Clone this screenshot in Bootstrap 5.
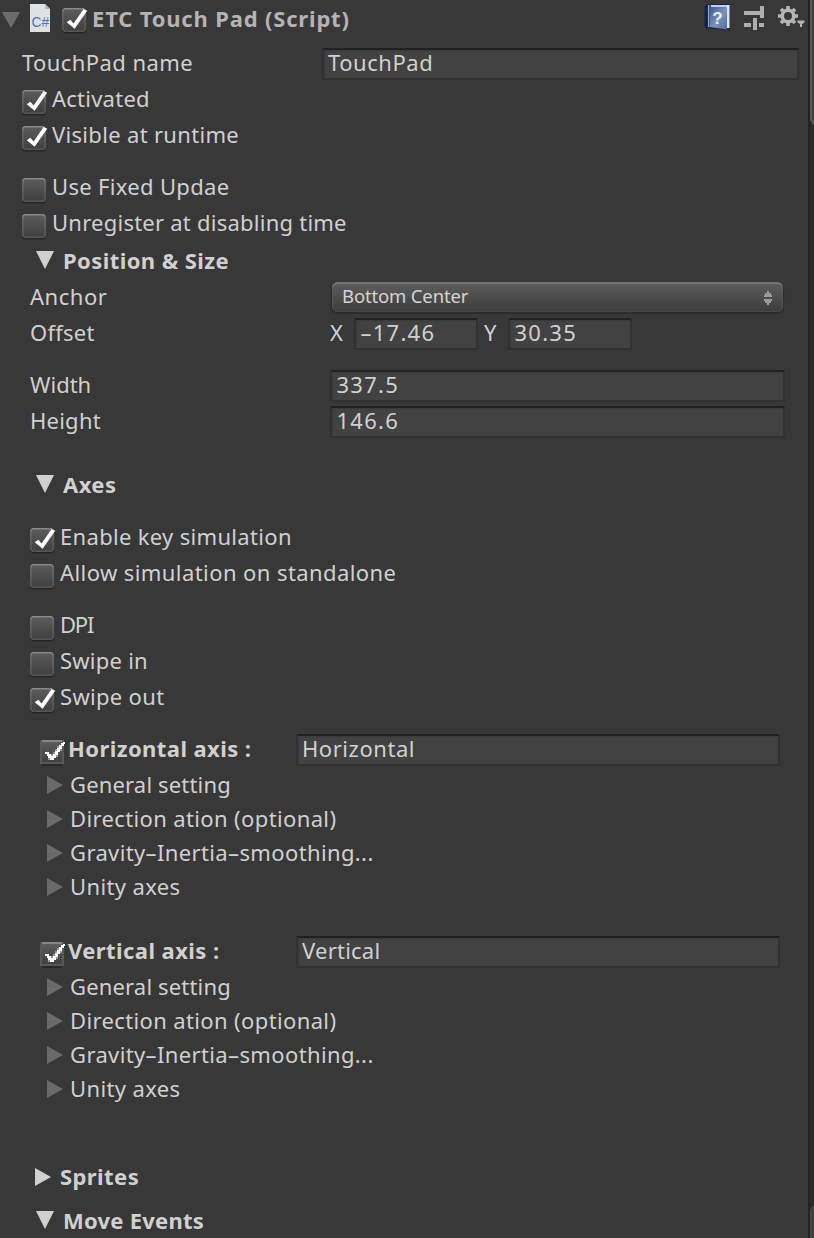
<!DOCTYPE html>
<html lang="en" data-bs-theme="dark">
<head>
<meta charset="utf-8">
<meta name="viewport" content="width=device-width, initial-scale=1">
<title>Inspector</title>
<link href="https://cdn.jsdelivr.net/npm/bootstrap@5.3.0/dist/css/bootstrap.min.css" rel="stylesheet">
<style>
  html, body { height: 1238px; overflow: hidden; }
  body { background: #383838; color: #d0d0d0; font: 22px/36px "Noto Sans", "Open Sans", sans-serif; letter-spacing: .42px; }
  .inspector { width: 808px; height: 1238px; }
  .line { height: 36px; display: flex; white-space: nowrap; }
  .line > svg { flex: none; }
  .fold { height: 34px; line-height: 34px; display: flex; white-space: nowrap; padding-left: 47px; letter-spacing: .37px; }
  .fold svg { flex: none; margin: 9px 7px 0 0; }
  .sp0 { letter-spacing: 0; }
  .sp2 { letter-spacing: .24px; }
  .sp3 { letter-spacing: .32px; }
  .sp6 { letter-spacing: .54px; }
  .sp8 { letter-spacing: .82px; }
  .fold.sp1 { letter-spacing: .16px; }
  .gap-row { height: 16px; }
  .in22 { padding-left: 22px; }
  .in30 { padding-left: 30px; }
  .in40 { padding-left: 40px; }
  .tick { width: 30px; height: 28px; margin-top: 10px; }
  .lab { width: 300px; flex: none; }
  .field.form-control {
    height: 32px; margin-top: 4px; padding: 0 4px 5px; flex: none;
    font: inherit; line-height: 23px; color: #d0d0d0; background: #424242;
    border: 2px solid #323232; border-top-color: #212121; border-radius: 0;
    box-shadow: inset 1px 1px 1px #3b3b3b;
  }
  .num.form-control { letter-spacing: 1.25px; padding-left: 4.5px; }
  .w124.form-control { width: 124px; }
  .w455.form-control { width: 455px; }
  .w477.form-control { width: 477px; }
  .w484.form-control { width: 484px; }
  .popup.btn {
    width: 451px; height: 30px; margin: 4px 0 0 2px; padding: 0 9px 2px 10px;
    font-size: 18.5px; line-height: 26px; letter-spacing: -.15px; color: #d4d4d4; border: 0; border-radius: 6px;
    background: linear-gradient(#5e5e5e, #3c3c3c);
    box-shadow: inset 0 2px 0 #747474, inset 0 -1px 0 #484848, inset 1px 0 0 #565656, inset -1px 0 0 #565656, 0 1px 1px 1px #2c2c2c;
  }
  .popup svg { margin-top: 3px; }
  .sect { font-weight: 700; }
  .hd { height: 44px; color: #b4b4b4; font-weight: 700; }
  .hd-arrow { width: 22px; height: 22px; margin-top: 8px; flex: none; }
  .cs { margin: 4px 0 0 8px; flex: none; }
  .hd-tick { margin: 8px 0 0 12px; flex: none; }
  .hd-title { width: 610px; flex: none; }
  .hd-tools { flex: none; }
  .dn { margin: 11px 9px 0 6px; }
  .rt { margin: 10px 9px 0 5px; }
  .big { height: 38px; padding-top: 2px; }
  .big .dn { margin-top: 9px; }
  .axes { margin-top: 28px; }
  .axes .dn { margin-top: 9px; }
  .events { margin-top: 8px; }
  .events .dn { margin-top: 9px; }
  .axis { width: 24px; flex: none; }
  .second { margin-left: 6px; }
  .dpi { letter-spacing: -1.2px; }
  .tick.pix { margin-right: -2px; }
  .axis-name { width: 228px; flex: none; font-weight: 700; }
  .folds { padding-top: 1px; }
  .folds svg { color: #6a6a6a; }
  .later { margin-top: 29px; }
  .tail { margin-top: 53px; }
  .track { width: 6px; height: 1238px; background: #2b2b2b; border-left: 2px solid #242424; overflow: hidden; }
  .thumb { width: 14px; border: 2px solid #585858; background: #414141; }
  .thumb.upper { height: 129px; margin-top: -2px; border-radius: 0 0 0 9px; }
  .thumb.lower { height: 60px; margin-top: 1079px; border-radius: 5px 0 0 0; border-color: #474747; background: #3c3c3c; }
</style>
</head>
<body>
<svg width="0" height="0" class="position-absolute" aria-hidden="true">
  <defs>
    <linearGradient id="face" x1="0" y1="0" x2="0" y2="1"><stop offset="0" stop-color="#5c5c5c"/><stop offset="1" stop-color="#404040"/></linearGradient>
    <linearGradient id="rim" x1="0" y1="0" x2="0" y2="1"><stop offset="0" stop-color="#8a8a8a"/><stop offset=".15" stop-color="#6a6a6a"/><stop offset="1" stop-color="#555"/></linearGradient>
    <linearGradient id="cover" x1="0" y1="0" x2="1" y2="1"><stop offset="0" stop-color="#34558c"/><stop offset=".55" stop-color="#7b95bb"/><stop offset="1" stop-color="#4d6c9c"/></linearGradient>
    <symbol id="off" viewBox="0 0 30 28">
      <rect x="0" y="1.400" width="24" height="24" rx="4" fill="#262626"/>
      <rect x=".8" y=".8" width="22.400" height="22.400" rx="3" fill="url(#face)" stroke="url(#rim)" stroke-width="1.600"/>
    </symbol>
    <symbol id="on" viewBox="0 0 30 28">
      <use href="#off" width="30" height="28"/>
      <path d="M4.800 14.200 8.300 11.800 11.600 15.500 21.600 1 25.200 2.800 12.600 20.800Z" fill="#fff"/>
    </symbol>
    <symbol id="onpix" viewBox="0 0 30 28">
      <path d="M2 24H22V26H2Z" fill="#282828"/>
      <path d="M0 0H24V24H0Z" fill="#585858"/>
      <path d="M2 0H22V2H2Z" fill="#858585"/>
      <path d="M2 2H22V22H2Z" fill="url(#face)"/>
      <path d="M5 12H9V14H11V16H13V14H15V11H17V8H19V5H21V3H23V2H25V4H24V6H22V9H20V12H18V15H16V18H14V20H10V18H8V16H7V14H5Z" fill="#fff"/>
      <path d="M11 14H13V16H11ZM13 12H15V14H13ZM15 9H17V11H15ZM17 6H19V8H17ZM8 18H10V20H8ZM16 15H18V17H16ZM20 9H22V11H20Z" fill="#999"/>
    </symbol>
    <symbol id="down" viewBox="0 0 18 18"><path d="M0 0H18L9 18Z" fill="currentColor"/></symbol>
    <symbol id="right" viewBox="0 0 16 18"><path d="M0 0L16 9 0 18Z" fill="currentColor"/></symbol>
  </defs>
</svg>

<div class="d-flex">
  <main class="inspector">
    <header class="hd d-flex text-nowrap">
      <svg class="hd-arrow" viewBox="0 0 22 22"><path d="M2 4H20L11 20Z" fill="#6c6c6c"/></svg>
      <svg class="cs" width="20" height="28" viewBox="0 0 20 28"><path d="M0 0H15L20 5V28H0Z" fill="#dfe2e4"/><path d="M15 0V5H20Z" fill="#b5b8bb"/><text x="1.500" y="23" font-family="Liberation Sans" font-size="14" font-weight="400" fill="#4a74c0" textLength="17.500" lengthAdjust="spacingAndGlyphs" letter-spacing="0">C#</text></svg>
      <svg class="tick hd-tick"><use href="#on"/></svg>
      <span class="hd-title sp8">ETC Touch Pad (Script)</span>
      <svg class="hd-tools" width="104" height="34" viewBox="702 0 104 34">
        <path d="M704.500 6 708 4V30L704.500 27Z" fill="#142440"/>
        <path d="M707 4H730V31L707 28Z" fill="#1b2c4b"/>
        <path d="M710 5H727V29.500L710 27Z" fill="url(#cover)"/>
        <path d="M708 5H709.400V27H708Z" fill="#8ba6cf"/>
        <path d="M727 5H729.500V28H727Z" fill="#dce4ee"/>
        <path d="M711 5H727V7H711Z" fill="#c3d0e2"/>
        <text x="712.200" y="23.500" font-family="Liberation Sans" font-weight="700" font-size="17" letter-spacing="0" fill="#e6edf7">?</text>
        <path d="M744 11H758V15H744ZM760 6H764V18H760ZM756 11H760V15H756ZM744 23H751V27H744ZM753 18H757V30H753ZM759 23H764V27H759Z" fill="#aeaeae"/>
        <circle cx="788" cy="16" r="5.800" fill="none" stroke="#b4b4b4" stroke-width="3.600"/>
        <path d="M788 6V9.500M788 22.500V26M778 16H781.500M794.500 16H798M781 9 783.500 11.500M795 9 792.500 11.500M781 23 783.500 20.500M795 23 792.500 20.500" stroke="#b4b4b4" stroke-width="3.600"/>
        <path d="M797.500 20.500H804.500V22.500L802 24V27H800V24L797.500 22.500Z" fill="#b4b4b4"/>
      </svg>
    </header>

    <section class="in22">
      <div class="line"><label class="lab">TouchPad name</label><input class="form-control field w477 sp6" type="text" value="TouchPad"></div>
      <div class="line"><svg class="tick"><use href="#on"/></svg><span class="sp2">Activated</span></div>
      <div class="line"><svg class="tick"><use href="#on"/></svg><span class="sp3">Visible at runtime</span></div>
      <div class="gap-row"></div>
      <div class="line"><svg class="tick"><use href="#off"/></svg><span class="sp3">Use Fixed Updae</span></div>
      <div class="line"><svg class="tick"><use href="#off"/></svg><span class="sp2">Unregister at disabling time</span></div>
    </section>

    <section class="in30">
      <div class="line sect big"><svg class="dn" width="18" height="18"><use href="#down"/></svg><span>Position &amp; Size</span></div>
      <div class="line"><label class="lab sp6">Anchor</label>
        <button type="button" class="btn popup d-flex justify-content-between align-items-center"><span>Bottom Center</span>
          <svg width="12" height="18" viewBox="0 0 12 18"><path d="M5 2H7V4H9V6H10V8H2V6H3V4H5ZM2 10H10V12H9V14H7V16H5V14H3V12H2Z" fill="#999"/></svg>
        </button></div>
      <div class="line"><span class="lab sp2">Offset</span><label class="axis">X</label><input class="form-control field num w124" type="text" value="–17.46"><label class="axis second">Y</label><input class="form-control field num w124" type="text" value="30.35"></div>
      <div class="gap-row"></div>
      <div class="line"><label class="lab sp0">Width</label><input class="form-control field num w455" type="text" value="337.5"></div>
      <div class="line"><label class="lab sp2">Height</label><input class="form-control field num w455" type="text" value="146.6"></div>
      <div class="line sect axes"><svg class="dn" width="18" height="18"><use href="#down"/></svg><span>Axes</span></div>
      <div class="gap-row"></div>
      <div class="line"><svg class="tick"><use href="#on"/></svg><span class="sp3">Enable key simulation</span></div>
      <div class="line"><svg class="tick"><use href="#off"/></svg><span>Allow simulation on standalone</span></div>
      <div class="gap-row"></div>
      <div class="line"><svg class="tick"><use href="#off"/></svg><span class="dpi">DPI</span></div>
      <div class="line"><svg class="tick"><use href="#off"/></svg><span class="sp2">Swipe in</span></div>
      <div class="line"><svg class="tick"><use href="#on"/></svg><span class="sp3">Swipe out</span></div>
      <div class="gap-row"></div>
    </section>

    <section class="axis-group">
      <div class="line in40"><svg class="tick pix"><use href="#onpix"/></svg><label class="axis-name">Horizontal axis :</label><input class="form-control field w484 sp6" type="text" value="Horizontal"></div>
      <div class="folds">
        <div class="fold sp1"><svg width="16" height="18"><use href="#right"/></svg><span>General setting</span></div>
        <div class="fold"><svg width="16" height="18"><use href="#right"/></svg><span>Direction ation (optional)</span></div>
        <div class="fold"><svg width="16" height="18"><use href="#right"/></svg><span>Gravity–Inertia–smoothing...</span></div>
        <div class="fold"><svg width="16" height="18"><use href="#right"/></svg><span>Unity axes</span></div>
      </div>
    </section>

    <section class="axis-group later">
      <div class="line in40"><svg class="tick pix"><use href="#onpix"/></svg><label class="axis-name">Vertical axis :</label><input class="form-control field w484 sp2" type="text" value="Vertical"></div>
      <div class="folds">
        <div class="fold sp1"><svg width="16" height="18"><use href="#right"/></svg><span>General setting</span></div>
        <div class="fold"><svg width="16" height="18"><use href="#right"/></svg><span>Direction ation (optional)</span></div>
        <div class="fold"><svg width="16" height="18"><use href="#right"/></svg><span>Gravity–Inertia–smoothing...</span></div>
        <div class="fold"><svg width="16" height="18"><use href="#right"/></svg><span>Unity axes</span></div>
      </div>
    </section>

    <section class="in30 tail">
      <div class="line sect"><svg class="rt" width="16" height="18"><use href="#right"/></svg><span>Sprites</span></div>
      <div class="line sect events sp2"><svg class="dn" width="18" height="18"><use href="#down"/></svg><span>Move Events</span></div>
    </section>
  </main>
  <aside class="track"><div class="thumb upper"></div><div class="thumb lower"></div></aside>
</div>
<script src="https://cdn.jsdelivr.net/npm/bootstrap@5.3.0/dist/js/bootstrap.bundle.min.js"></script>
</body>
</html>
